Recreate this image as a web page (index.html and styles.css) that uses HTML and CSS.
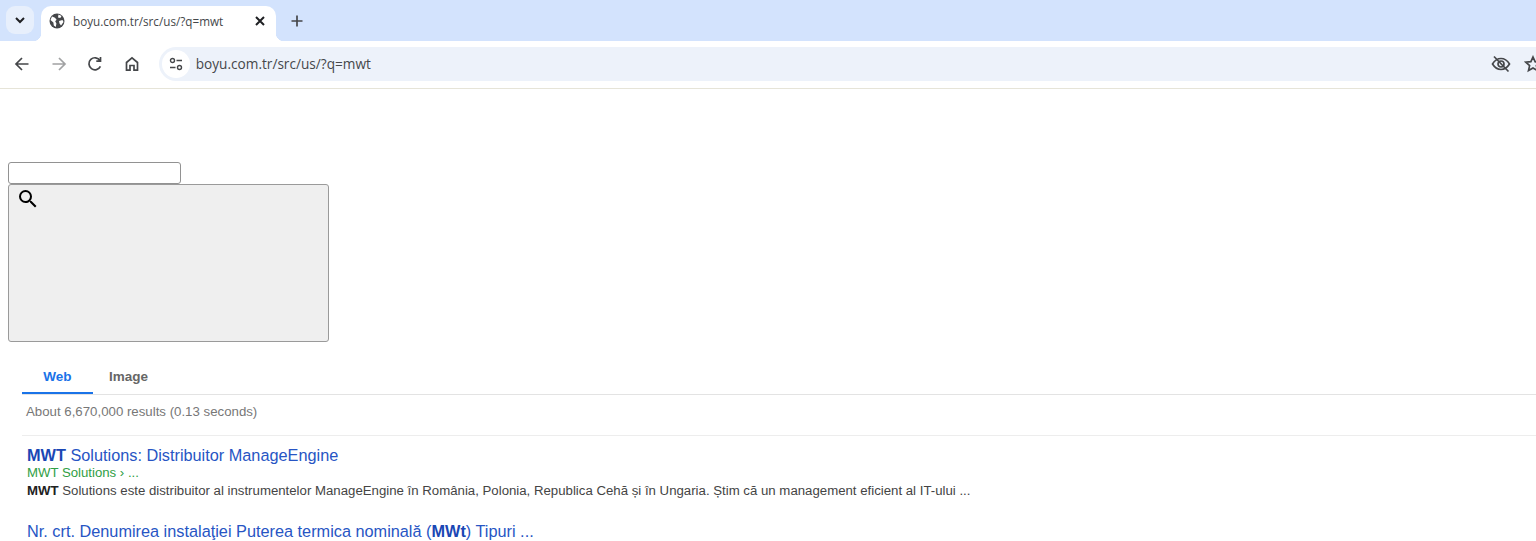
FILE: index.html
```html
<!DOCTYPE html>
<html lang="en">
<head>
    <meta charset="UTF-8">
    <meta name="viewport" content="width=device-width, initial-scale=1.0">
    <title>boyu.com.tr/src/us/?q=mwt</title>
    <link rel="stylesheet" href="styles.css">
</head>
<body>
    <div class="tabstrip">
        <div class="tab-search">
            <svg width="12" height="12" viewBox="0 0 12 12"><path d="M2 4l4 4 4-4" class="ic-bold"/></svg>
        </div>
        <div class="tab">
            <svg class="favicon" width="16" height="16" viewBox="0 0 16 16">
                <circle cx="8" cy="8" r="7.5" fill="#45474a"/>
                <path d="M3 3.500l3 1.200 1.600 2-1.400 1.600 1.200 2.200-.6 3.600-2-1.600-.4-3L1.500 7zM9.500 1.500l3 1.500-1.200 2-2.300-.6zM10 8l3.500-1 1 2-2.500 3.500-1.500-2z" fill="#fff"/>
            </svg>
            <span class="tab-title">boyu.com.tr/src/us/?q=mwt</span>
            <svg class="tab-close" width="12" height="12" viewBox="0 0 12 12"><path d="M2 2l8 8M10 2l-8 8" class="ic-bold"/></svg>
        </div>
        <svg class="new-tab" width="14" height="14" viewBox="0 0 14 14"><path d="M7 1.500v11M1.500 7h11" class="ic"/></svg>
    </div>

    <div class="toolbar">
        <svg class="nav" width="16" height="16" viewBox="0 0 16 16"><path d="M14.500 8H2M8 2L2 8l6 6" class="ic"/></svg>
        <svg class="nav dim" width="16" height="16" viewBox="0 0 16 16"><path d="M1.500 8H14M8 2l6 6-6 6" class="ic"/></svg>
        <svg class="nav" width="16" height="16" viewBox="0 0 16 16"><path d="M13.400 10.300A6 6 0 1 1 13 4.500M13.500 1v4.200H9.300" class="ic"/></svg>
        <svg class="nav" width="16" height="16" viewBox="0 0 16 16"><path d="M2.500 14.200V6.500L8 1.800l5.500 4.700v7.700H10V9.500H6v4.700z" class="ic"/></svg>
        <div class="omnibox">
            <span class="site-info">
                <svg width="14" height="14" viewBox="0 0 14 14"><circle cx="3.500" cy="3.500" r="2" class="ic-thin"/><path d="M7.500 3.500H13M1 10.500h5.500" class="ic-thin"/><circle cx="10.500" cy="10.500" r="2" class="ic-thin"/></svg>
            </span>
            <span class="url">boyu.com.tr/src/us/?q=mwt</span>
            <svg class="eye" width="20" height="20" viewBox="0 0 20 20"><path d="M1.500 10C4 6 7 4.500 10 4.500S16 6 18.500 10C16 14 13 15.500 10 15.500S4 14 1.500 10z" class="ic"/><circle cx="10" cy="10" r="3" class="ic"/><path d="M3 2.500l14.500 15" class="ic"/></svg>
            <svg class="star" width="18" height="18" viewBox="0 0 18 18"><path d="M9 2l2.100 4.700 5.100.5-3.800 3.400 1.100 5L9 13l-4.500 2.600 1.100-5-3.800-3.400 5.100-.5z" class="ic"/></svg>
        </div>
    </div>

    <div class="page">
        <div class="search-form">
            <input class="search-input" type="text">
            <button class="search-button">
                <svg width="24" height="24" viewBox="0 0 24 24"><path d="M15.500 14h-.79l-.28-.27A6.471 6.471 0 0 0 16 9.500 6.500 6.500 0 1 0 9.500 16c1.610 0 3.090-.59 4.230-1.570l.27.28v.79l5 4.990L20.490 19l-4.990-5zm-6 0C7.010 14 5 11.990 5 9.500S7.010 5 9.500 5 14 7.010 14 9.500 11.990 14 9.500 14z"/></svg>
            </button>
        </div>

        <div class="tabs">
            <div class="tab-link active">Web</div>
            <div class="tab-link">Image</div>
        </div>
        <div class="result-count">About 6,670,000 results (0.13 seconds)</div>

        <div class="result">
            <a class="result-title"><b>MWT</b> Solutions: Distribuitor ManageEngine</a>
            <div class="result-url">MWT Solutions › ...</div>
            <div class="result-snippet"><b>MWT</b> Solutions este distribuitor al instrumentelor ManageEngine în România, Polonia, Republica Cehă și în Ungaria. Știm că un management eficient al IT-ului ...</div>
        </div>
        <div class="result">
            <a class="result-title">Nr. crt. Denumirea instalaţiei Puterea termica nominală (<b>MWt</b>) Tipuri ...</a>
        </div>
    </div>
</body>
</html>
```

FILE: styles.css
```css
html, body {
    height: 541px;
    overflow: hidden;
}
body {
    margin: 0;
    font-family: "Liberation Sans", Arial, sans-serif;
    background: white;
}
.ic { fill: none; stroke: #45474a; stroke-width: 1.7; }
.ic-bold { fill: none; stroke: #1f2023; stroke-width: 2; }
.ic-thin { fill: none; stroke: #45474a; stroke-width: 1.4; }

/* browser chrome */
.tabstrip {
    height: 41px;
    background: #d3e3fd;
    display: flex;
    align-items: flex-end;
    padding-left: 6px;
    box-sizing: border-box;
}
.tab-search {
    width: 28px;
    height: 28px;
    margin-bottom: 7px;
    border-radius: 9px;
    background: #e7effc;
    display: flex;
    align-items: center;
    justify-content: center;
}
.tab {
    position: relative;
    width: 235px;
    height: 35px;
    margin-left: 7px;
    background: white;
    border-radius: 10px 10px 0 0;
    display: flex;
    align-items: center;
    padding: 0 10px 5px 8px;
    box-sizing: border-box;
}
/* little curves where the tab runs into the toolbar */
.tab::before,
.tab::after {
    content: "";
    position: absolute;
    bottom: 0;
    width: 8px;
    height: 8px;
}
.tab::before {
    left: -8px;
    background: radial-gradient(circle at 0 0, #d3e3fd 8px, white 8.500px);
}
.tab::after {
    right: -8px;
    background: radial-gradient(circle at 100% 0, #d3e3fd 8px, white 8.500px);
}
.tab-title {
    font-family: "Open Sans", sans-serif;
    font-size: 11.700px;
    color: #45474a;
    margin-left: 8px;
    flex: 1;
}
.new-tab {
    margin: 0 0 13px 14px;
}
.toolbar {
    height: 48px;
    background: white;
    border-bottom: 1px solid #e6e4d8;
    box-sizing: border-box;
    display: flex;
    align-items: center;
    padding: 0 0 2px 14px;
    gap: 20.700px;
}
.dim { opacity: 0.5; }
.omnibox {
    flex: 1;
    height: 34px;
    margin-left: -2px;
    margin-right: -60px;
    background: #edf2fa;
    border-radius: 17px;
    display: flex;
    align-items: center;
    padding-left: 3px;
}
.site-info {
    width: 28px;
    height: 28px;
    border-radius: 50%;
    background: white;
    display: flex;
    align-items: center;
    justify-content: center;
}
.url {
    font-family: "Open Sans", sans-serif;
    font-size: 13.640px;
    color: #45474a;
    margin-left: 6px;
    flex: 1;
}
.eye { margin-right: 13px; }
.star { margin-right: 54px; }

/* page */
.page {
    padding-top: 73px;
}
.search-form {
    margin-left: 8px;
}
.search-input {
    display: block;
    width: 173px;
    height: 22px;
    box-sizing: border-box;
    border: 1px solid #929292;
    border-radius: 3px;
    margin: 0;
    background: white;
}
.search-button {
    width: 321px;
    height: 158px;
    box-sizing: border-box;
    margin: 0;
    padding: 2px 0 0 7px;
    border: 1px solid #9a9a9a;
    border-radius: 3px;
    background: #efefef;
    display: flex;
    align-items: flex-start;
}
.tabs {
    margin: 20px 0 0 22px;
    height: 32px;
    border-bottom: 1px solid #e3e3e3;
    display: flex;
}
.tab-link {
    font-size: 13.500px;
    font-weight: bold;
    color: #666;
    padding: 7px 16px 0;
    height: 25px;
    text-align: center;
}
.tab-link.active {
    color: #1a73e8;
    width: 39px;
    border-bottom: 2px solid #1a73e8;
    height: 23px;
}
.result-count {
    margin-left: 22px;
    padding: 9px 0 16px 4px;
    height: 15px;
    line-height: 15px;
    font-size: 13.250px;
    color: #777;
    border-bottom: 1px solid #ededed;
}
.result {
    margin: 10px 0 0 27px;
}
.result + .result {
    margin-top: 22px;
}
.result-title {
    display: block;
    font-size: 16.300px;
    line-height: 18px;
    color: #2755c4;
}
.result-title b { color: #1a47b4; }
.result-url {
    font-size: 13.200px;
    line-height: 17px;
    color: #2f9e44;
}
.result-snippet {
    font-size: 13.220px;
    line-height: 19px;
    color: #444;
}
.result-snippet b { color: #222; }
```
